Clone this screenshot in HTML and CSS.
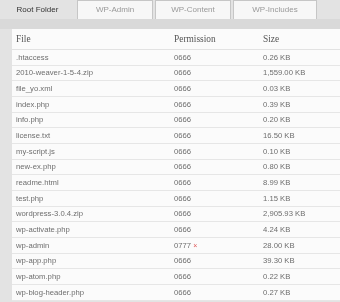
FILE: index.html
```
<!DOCTYPE html>
<html lang="en">
<head>
    <meta charset="UTF-8">
    <title>File Browser</title>
    <link rel="stylesheet" href="styles.css">
</head>
<body>

    <!-- Tabs -->
    <div class="tabs">
        <div class="tab active">Root Folder</div>
        <div class="tab">WP-Admin</div>
        <div class="tab">WP-Content</div>
        <div class="tab wide">WP-Includes</div>
    </div>
    <div class="band"></div>

    <div class="panel">
        <table class="files">
            <thead>
                <tr>
                    <th class="col-name">File</th>
                    <th class="col-perm">Permission</th>
                    <th class="col-size">Size</th>
                </tr>
            </thead>
            <tbody>
                <tr><td>.htaccess</td><td>0666</td><td>0.26 KB</td></tr>
                <tr><td>2010-weaver-1-5-4.zip</td><td>0666</td><td>1,559.00 KB</td></tr>
                <tr><td>file_yo.xml</td><td>0666</td><td>0.03 KB</td></tr>
                <tr><td>index.php</td><td>0666</td><td>0.39 KB</td></tr>
                <tr><td>info.php</td><td>0666</td><td>0.20 KB</td></tr>
                <tr><td>license.txt</td><td>0666</td><td>16.50 KB</td></tr>
                <tr><td>my-script.js</td><td>0666</td><td>0.10 KB</td></tr>
                <tr><td>new-ex.php</td><td>0666</td><td>0.80 KB</td></tr>
                <tr><td>readme.html</td><td>0666</td><td>8.99 KB</td></tr>
                <tr><td>test.php</td><td>0666</td><td>1.15 KB</td></tr>
                <tr><td>wordpress-3.0.4.zip</td><td>0666</td><td>2,905.93 KB</td></tr>
                <tr><td>wp-activate.php</td><td>0666</td><td>4.24 KB</td></tr>
                <tr><td>wp-admin</td><td>0777 <span class="warn">&times;</span></td><td>28.00 KB</td></tr>
                <tr><td>wp-app.php</td><td>0666</td><td>39.30 KB</td></tr>
                <tr><td>wp-atom.php</td><td>0666</td><td>0.22 KB</td></tr>
                <tr><td>wp-blog-header.php</td><td>0666</td><td>0.27 KB</td></tr>
            </tbody>
        </table>
    </div>

</body>
</html>
```
FILE: styles.css
```
body {
    margin: 0;
    background-color: #e3e3e3;
    font-family: 'Liberation Sans', Arial, sans-serif;
    overflow: hidden;
}

/* Tabs */
.tabs {
    display: flex;
    gap: 2px;
    height: 19px;
}

.tab {
    width: 76px;
    box-sizing: border-box;
    border: 1px solid #c6c6c6;
    border-bottom: none;
    background-color: #f7f7f7;
    color: #999;
    font-size: 8px;
    line-height: 18px;
    text-align: center;
    will-change: transform; /* grey text smoothing */
}

.tab.active {
    width: 75px;
    border-color: transparent;
    background-color: transparent;
    color: #333;
}

.tab.wide {
    width: 84px;
}

.band {
    height: 10px;
    background-color: #d9d9d9;
}

/* File table */
.panel {
    margin-left: 12px;
    background-color: #fbfbfb;
}

.files {
    width: 100%;
    border-collapse: collapse;
    will-change: transform;
}

.files th {
    height: 20px;
    padding: 0 4px;
    text-align: left;
    font-family: 'Liberation Serif', serif;
    font-weight: normal;
    font-size: 9.4px;
    color: #555;
    border-bottom: 1px solid #e2e2e2;
}

.files td {
    height: 14.67px;
    padding: 0 4px;
    font-size: 7.7px;
    color: #6e6e6e;
    border-bottom: 1px solid #e6e6e6;
}

.col-name {
    width: 150px;
}

.col-perm {
    width: 81px;
}

.warn {
    color: #d55;
    font-size: 7px;
}
```
